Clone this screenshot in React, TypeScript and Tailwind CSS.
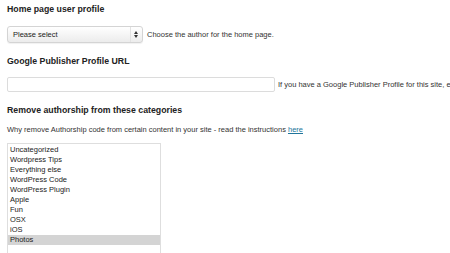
import React from 'react';

const categories = [
  'Uncategorized',
  'Wordpress Tips',
  'Everything else',
  'WordPress Code',
  'WordPress Plugin',
  'Apple',
  'Fun',
  'OSX',
  'iOS',
  'Photos',
];

export default function App() {
  return (
    <div className="h-[253px] w-[450px] overflow-hidden bg-white pl-[7px] text-[#333] font-['Liberation_Sans',Arial,sans-serif]">
      {/* Home page user profile */}
      <h3 className="mt-[3px] text-[8.75px] font-bold leading-[12px] text-[#222]">Home page user profile</h3>
      <div className="mt-[11px] flex items-center gap-[4px]">
        <div className="flex h-[17px] w-[136px] items-center justify-between rounded-[3px] border border-[#d4d4d4] bg-gradient-to-b from-white to-[#ececec] pl-[5px] pr-[4px] shadow-[0_1px_1px_rgba(0,0,0,0.06)]">
          <span className="text-[7.5px] text-[#222]">Please select</span>
          <div className="flex h-full items-center border-l border-[#e2e2e2] pl-[3px]">
            <svg width="4" height="7" viewBox="0 0 4 7">
              <path d="M0 3 L2 0 L4 3 Z" fill="#333" />
              <path d="M0 4 L2 7 L4 4 Z" fill="#333" />
            </svg>
          </div>
        </div>
        <span className="text-[7.5px]">Choose the author for the home page.</span>
      </div>

      {/* Google Publisher Profile URL */}
      <h3 className="mt-[12px] text-[8.75px] font-bold leading-[12px] text-[#222]">Google Publisher Profile URL</h3>
      <div className="mt-[10px] flex items-center gap-[3px] whitespace-nowrap">
        <div className="h-[15px] w-[268px] shrink-0 rounded-[2px] border border-[#dcdcdc] bg-white" />
        <span className="text-[7.5px]">If you have a Google Publisher Profile for this site, enter the URL here.</span>
      </div>

      {/* Remove authorship */}
      <h3 className="mt-[12px] text-[8.75px] font-bold leading-[12px] text-[#222]">Remove authorship from these categories</h3>
      <p className="mt-[9px] text-[7.5px] leading-[10px]">
        Why remove Authorship code from certain content in your site - read the instructions{' '}
        <a href="#" className="text-[#21759b] underline">here</a>
      </p>
      <div className="mt-[8px] h-[120px] w-[154px] border border-[#dedede] bg-white pt-px">
        {categories.map((c) => (
          <div
            key={c}
            className={`h-[10px] pl-[2px] text-[7.5px] leading-[10px] text-[#222] ${c === 'Photos' ? 'bg-[#d4d4d4]' : ''}`}
          >
            {c}
          </div>
        ))}
      </div>
    </div>
  );
}
